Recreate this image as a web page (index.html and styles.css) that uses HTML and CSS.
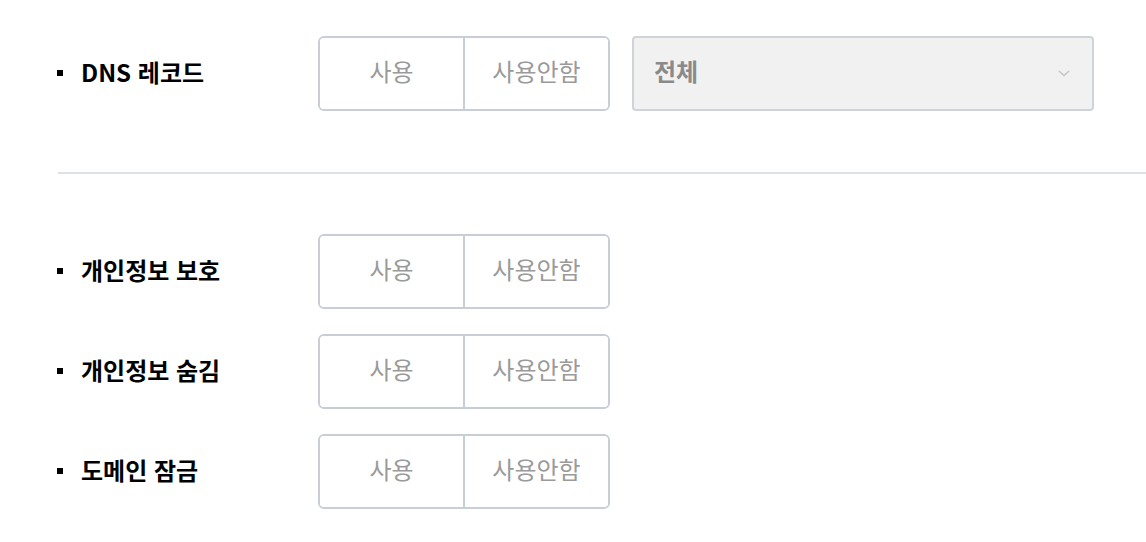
FILE: index.html
```html
<!DOCTYPE html>
<html lang="ko">
<head>
<meta charset="utf-8">
<link rel="stylesheet" href="styles.css">
</head>
<body>
<div class="page">
  <section class="group first">
    <div class="row">
      <div class="label"><span class="bullet"></span><span class="label-text">DNS 레코드</span></div>
      <div class="toggle"><button class="opt">사용</button><button class="opt">사용안함</button></div>
      <div class="select"><span class="sel-text">전체</span>
        <svg class="chev" width="12" height="7" viewBox="0 0 12 7"><path d="M1 1 L6 5.5 L11 1" fill="none" stroke="#c4c4c4" stroke-width="1.4"/></svg>
      </div>
    </div>
  </section>
  <hr class="divider">
  <section class="group second">
    <div class="row">
      <div class="label"><span class="bullet"></span><span class="label-text">개인정보 보호</span></div>
      <div class="toggle"><button class="opt">사용</button><button class="opt">사용안함</button></div>
    </div>
    <div class="row">
      <div class="label"><span class="bullet"></span><span class="label-text">개인정보 숨김</span></div>
      <div class="toggle"><button class="opt">사용</button><button class="opt">사용안함</button></div>
    </div>
    <div class="row">
      <div class="label"><span class="bullet"></span><span class="label-text">도메인 잠금</span></div>
      <div class="toggle"><button class="opt">사용</button><button class="opt">사용안함</button></div>
    </div>
  </section>
</div>
</body>
</html>
```
FILE: styles.css
```css
* { box-sizing: border-box; }
html, body { margin: 0; padding: 0; background: #fff; }
body {
  font-family: "Noto Sans CJK KR", "Noto Sans", sans-serif;
  color: #111;
  overflow: hidden;
}
.page { width: 1146px; }
.group { display: flex; flex-direction: column; gap: 25px; padding-left: 57px; }
.group.first { padding-top: 36px; }
.group.second { padding-top: 0; }
.row { display: flex; align-items: center; height: 75px; }
.label {
  width: 261px;
  display: flex;
  align-items: center;
  font-size: 24px;
  font-weight: 700;
  color: #000;
}
.label-text { line-height: 1; margin-top: -4px; }
.bullet {
  width: 6px; height: 6px;
  background: #000;
  margin-right: 18px;
  margin-top: -2px;
  flex: none;
}
.toggle {
  display: flex;
  width: 292px;
  height: 75px;
  border: 2px solid #c9cdd5;
  border-radius: 6px;
  overflow: hidden;
}
.opt {
  flex: 1;
  border: 0;
  background: #fff;
  font-family: inherit;
  font-size: 24px;
  line-height: 1;
  color: #9a9a9a;
  padding: 0 0 6px;
  cursor: pointer;
}
.opt + .opt { border-left: 2px solid #c9cdd5; }
.select {
  margin-left: 22px;
  width: 462px;
  height: 75px;
  border: 2px solid #cfd3da;
  border-radius: 4px;
  background: #f1f1f1;
  display: flex;
  align-items: center;
  justify-content: space-between;
  padding: 0 22px 0 20px;
}
.sel-text { font-size: 24px; line-height: 1; font-weight: 700; color: #8a8a8a; padding-bottom: 6px; }
.chev { margin-top: -1px; }
.divider {
  border: 0;
  height: 2px;
  background: #dde1e6;
  margin: 61px 0 60px 58px;
}
```
